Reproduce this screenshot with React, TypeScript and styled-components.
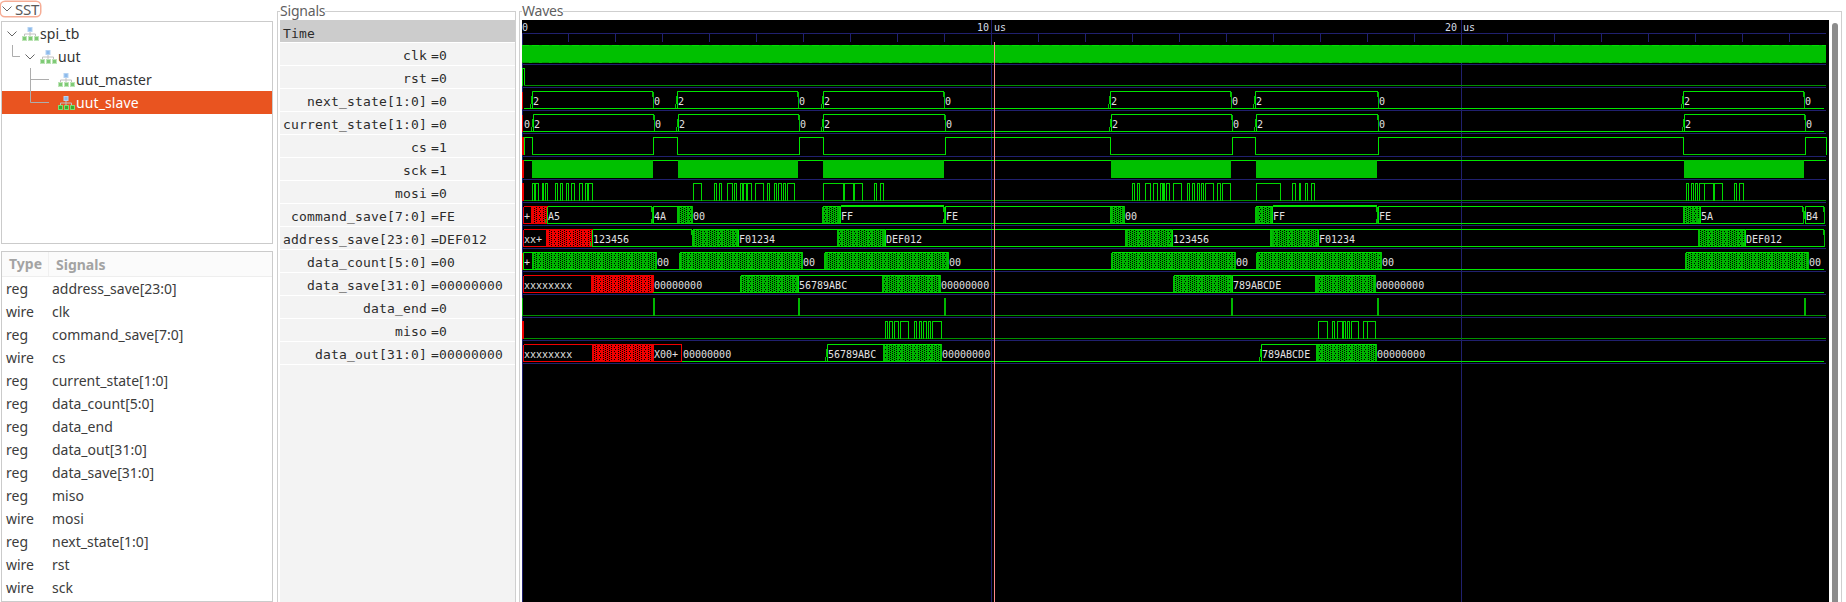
import React from "react";
import styled, { createGlobalStyle } from "styled-components";

const GlobalStyle = createGlobalStyle`
  html, body { margin: 0; padding: 0; background: #fff; overflow: hidden; }
  #root { height: 602px; }
`;

const UI_FONT = `"Noto Sans", "Open Sans", sans-serif`;
const MONO_FONT = `"DejaVu Sans Mono", "Liberation Mono", monospace`;

const Page = styled.div`
  display: flex;
  width: 1846px;
  height: 602px;
  overflow: hidden;
  font-family: ${UI_FONT};
`;
const LeftColumn = styled.div`
  width: 274px;
  flex: none;
  display: flex;
  flex-direction: column;
`;
const SstHeader = styled.div`
  align-self: flex-start;
  display: flex;
  align-items: center;
  gap: 3px;
  height: 14px;
  margin: 2px 0 5px 1px;
  padding: 0 1px 0 1px;
  border-radius: 4px;
  box-shadow: 0 0 0 1.5px #f6ad96;
  font-size: 15px;
  letter-spacing: -0.2px;
  color: #5a5a5a;
`;
const Panel = styled.div<{ $grow?: boolean }>`
  margin-left: 1px;
  width: 272px;
  box-sizing: border-box;
  border: 1px solid #cbcbcb;
  background: #fff;
  overflow: hidden;
  ${(p) => (p.$grow ? "flex: 1;" : "height: 223px; margin-bottom: 7px;")}
`;
const TreeRow = styled.div<{ $selected?: boolean }>`
  display: flex;
  align-items: center;
  height: 23px;
  padding-left: 1px;
  font-size: 14px;
  color: ${(p) => (p.$selected ? "#ffffff" : "#333333")};
  background: ${(p) => (p.$selected ? "#e95420" : "transparent")};
`;
const TreeLabel = styled.span`
  margin-left: 1px;
  letter-spacing: 0.1px;
`;
const TableHead = styled.div`
  display: grid;
  grid-template-columns: 47px 1fr;
  height: 24px;
  align-items: center;
  background: #fbfbfb;
  border-bottom: 1px solid #eeeeee;
  font-size: 14px;
  font-weight: 700;
  color: #a3a3a3;
`;
const HeadCell = styled.span`
  padding-left: 7px;
  &:first-child { border-right: 1px solid #f0f0f0; line-height: 24px; }
`;
const TableRow = styled.div`
  display: grid;
  grid-template-columns: 46px 1fr;
  box-sizing: border-box;
  height: 23px;
  align-items: center;
  padding: 0 0 0 4px;
  font-size: 14px;
  color: #3c3c3c;
  white-space: nowrap;
`;
const Frame = styled.fieldset`
  margin: 2px 0 0 3px;
  padding: 0 0 0 2px;
  border: 1px solid #cfcfcf;
  border-bottom: none;
  min-width: 0;
  height: 600px;
  box-sizing: border-box;
`;
const SignalFrame = styled(Frame)`
  width: 239px;
  flex: none;
`;
const WaveFrame = styled(Frame)`
  width: 1323px;
  flex: none;
`;
const FrameTitle = styled.legend`
  padding: 0;
  margin-left: 0;
  height: 18px;
  line-height: 18px;
  font-size: 14px;
  letter-spacing: -0.2px;
  color: #5f5f5f;
`;
const SignalPanel = styled.div`
  height: 582px;
  background: #f3f3f3;
  font-family: ${MONO_FONT};
  font-size: 13px;
  letter-spacing: 0.17px;
  color: #2c2c2c;
`;
const TimeRow = styled.div`
  height: 22px;
  line-height: 28px;
  padding-left: 3px;
  background: #cccccc;
  border-bottom: 1px solid #ffffff;
`;
const SignalRow = styled.div`
  display: grid;
  grid-template-columns: 147px 1fr;
  column-gap: 4px;
  height: 22px;
  line-height: 26px;
  border-bottom: 1px solid #ffffff;
  white-space: nowrap;
`;
const SignalName = styled.span`
  text-align: right;
`;
const SignalValue = styled.span``;
const WaveBody = styled.div`
  display: flex;
  height: 582px;
`;
const WaveCanvas = styled.svg`
  display: block;
  flex: none;
  background: #000000;
`;
const ScrollThumb = styled.div`
  width: 6px;
  height: 600px;
  margin: 3px 0 0 3px;
  border-radius: 3px;
  background: #8c8c8c;
  flex: none;
`;

/* ---------- icons ---------- */
const Chevron = ({ color = "#666" }: { color?: string }) => (
  <svg width="10" height="8" viewBox="0 0 10 8" style={{ flex: "none" }}>
    <path d="M0.5 1.5 L5 6 L9.5 1.5" fill="none" stroke={color} strokeWidth="1" />
  </svg>
);

const ModuleIcon = ({ vivid }: { vivid?: boolean }) => {
  const outer = vivid ? "#7fdc70" : "#bde5b7";
  const inner = vivid ? "#35b02f" : "#7fca76";
  return (
    <svg width="17" height="14" viewBox="0 0 17 14" style={{ flex: "none" }}>
      <rect x="5.5" y="0" width="5" height="5" fill="#b5d3f3" />
      <rect x="6.5" y="1" width="3" height="3" fill="#8dbbec" />
      <path d="M8 5v2M2.5 9V7h11v2M8 7v2" fill="none" stroke="#c0c0c0" strokeWidth="1" />
      {[0, 6, 12].map((x) => (
        <g key={x}>
          <rect x={x} y="9" width="5" height="5" fill={outer} />
          <rect x={x + 1} y="10" width="3" height="3" fill={inner} />
        </g>
      ))}
    </svg>
  );
};

const Guide = ({ width, d }: { width: number; d?: string }) => (
  <svg width={width} height="23" viewBox={`0 0 ${width} 23`} style={{ flex: "none", overflow: "visible" }}>
    {d && <path d={d} fill="none" stroke="#adadad" strokeWidth="1" />}
  </svg>
);

/* ---------- wave data ---------- */
type Kind = "box" | "zero" | "dense";
type Seg = { a: number; b: number; k: Kind; t?: string; red?: boolean; thick?: boolean };
const box = (a: number, b: number, t?: string, thick?: boolean): Seg => ({ a, b, k: "box", t, thick });
const zero = (a: number, b: number, t?: string): Seg => ({ a, b, k: "zero", t });
const dense = (a: number, b: number): Seg => ({ a, b, k: "dense" });
const rbox = (a: number, b: number, t?: string): Seg => ({ a, b, k: "box", t, red: true });
const rdense = (a: number, b: number): Seg => ({ a, b, k: "dense", red: true });

const SEP = { clk: 64, rst: 87, next: 110, cur: 133, cs: 156, sck: 179, mosi: 202, cmd: 225, addr: 248, cnt: 271, save: 294, end: 317, miso: 340, out: 363 };
const RIGHT = 1826;

const states = (edges: number[]): Seg[] => {
  const r: Seg[] = [];
  for (let i = 0; i < edges.length - 1; i++) {
    r.push(i % 2 === 0 ? box(edges[i], edges[i + 1], "2") : zero(edges[i], edges[i + 1], "0"));
  }
  return r;
};

const BUSES: { sep: number; segs: Seg[] }[] = [
  { sep: SEP.next, segs: [zero(524, 532), ...states([532, 653, 677, 798, 823, 944, 1110, 1231, 1255, 1378, 1683, 1804, 1824])] },
  { sep: SEP.cur, segs: [zero(523, 533, "0"), ...states([533, 654, 678, 799, 823, 945, 1111, 1232, 1256, 1378, 1684, 1805, 1824])] },
  {
    sep: SEP.cmd,
    segs: [
      rbox(523, 532, "+"), rdense(532, 547), box(547, 652, "A5"), box(653, 678, "4A"), dense(678, 692), zero(692, 823, "00"),
      dense(823, 840), box(840, 944, "FF", true), box(945, 1111, "FE"), dense(1111, 1124), zero(1124, 1256, "00"),
      dense(1256, 1272), box(1272, 1377, "FF", true), box(1378, 1684, "FE"), dense(1684, 1700), box(1700, 1803, "5A"), box(1805, 1824, "B4"),
    ],
  },
  {
    sep: SEP.addr,
    segs: [
      rbox(523, 547, "xx+"), rdense(547, 592), box(592, 692, "123456"), dense(693, 738), box(738, 838, "F01234"), dense(838, 885),
      box(885, 1126, "DEF012"), dense(1126, 1172), box(1172, 1271, "123456"), dense(1271, 1318), box(1318, 1699, "F01234"),
      dense(1699, 1745), box(1745, 1824, "DEF012"),
    ],
  },
  {
    sep: SEP.cnt,
    segs: [
      box(523, 533, "+"), dense(533, 656), zero(656, 680, "00"), dense(680, 802), zero(802, 825, "00"), dense(825, 948),
      zero(948, 1112, "00"), dense(1112, 1235), zero(1235, 1257, "00"), dense(1257, 1381), zero(1381, 1686, "00"),
      dense(1686, 1808), zero(1808, 1824, "00"),
    ],
  },
  {
    sep: SEP.save,
    segs: [
      rbox(523, 592, "xxxxxxxx"), rdense(592, 653), zero(653, 741, "00000000"), dense(741, 798), box(798, 883, "56789ABC"),
      dense(883, 940), zero(940, 1174, "00000000"), dense(1174, 1231), box(1232, 1316, "789ABCDE"), dense(1316, 1375), zero(1375, 1824, "00000000"),
    ],
  },
  {
    sep: SEP.out,
    segs: [
      rbox(523, 593, "xxxxxxxx"), rdense(593, 653), rbox(653, 682, "X00+"), zero(682, 827, "00000000"), box(827, 884, "56789ABC"),
      dense(884, 941), zero(941, 1261, "00000000"), box(1261, 1317, "789ABCDE"), dense(1317, 1376), zero(1376, 1824, "00000000"),
    ],
  },
];

// high intervals in zoom coordinates (origin + z / 3)
const z = (o: number, list: number[][]) => list.map(([a, b]) => [o + a / 3, o + b / 3]);
const MOSI = [
  ...z(270, [[787, 791], [795, 805], [815, 820], [825, 831], [855, 861], [871, 875], [889, 895], [903, 912], [927, 937], [945, 951], [955, 965]]),
  ...z(660, [[100, 122], [162, 167], [177, 182], [200, 215], [222, 228], [240, 245], [250, 258], [262, 272], [285, 308], [322, 328], [342, 348], [355, 362], [368, 375], [380, 403], [490, 548], [552, 578], [582, 605], [642, 648], [660, 668]]),
  ...z(1050, [[246, 252], [262, 268], [285, 300], [308, 322], [330, 336], [340, 343], [347, 356], [370, 392], [410, 418], [425, 432], [440, 448], [452, 460], [465, 488], [500, 510], [516, 540], [618, 690], [726, 735], [746, 750], [765, 770], [783, 791]]),
  ...z(1446, [[720, 727], [735, 742], [748, 752], [760, 775], [775, 802], [805, 827], [865, 871], [880, 890]]),
];
const MISO = [
  ...z(660, [[676, 682], [688, 695], [703, 713], [720, 745], [763, 767], [777, 783], [790, 797], [805, 810], [815, 842]]),
  ...z(1050, [[805, 830], [847, 851], [860, 875], [880, 885], [890, 897], [902, 925], [940, 950], [952, 976]]),
];
const CS = [[524, 532], [653, 677], [799, 823], [945, 1110], [1232, 1255], [1378, 1683], [1805, RIGHT]];
const SCK_FILL = [[532, 653], [678, 798], [823, 944], [1111, 1231], [1256, 1377], [1684, 1804]];
const END_PULSES = [522, 653, 798, 944, 1231, 1377, 1804];

const TOP = (sep: number) => sep - 19 + 0.5;
const LOW = (sep: number) => sep - 2 + 0.5;

const pulsePath = (sep: number, highs: number[][]) => {
  const hi = TOP(sep);
  let d = "";
  highs.forEach(([a, b]) => {
    const x0 = Math.round(a) + 0.5;
    const x1 = Math.round(b) + 0.5;
    d += `M${x0} ${LOW(sep)}V${hi}H${x1}V${LOW(sep)}`;
  });
  return d;
};

const crossing = (x: number, sep: number, w = 2) =>
  `M${x} ${TOP(sep)}L${x + w} ${LOW(sep)}M${x} ${LOW(sep)}L${x + w} ${TOP(sep)}`;

const busPaths = () => {
  const p = { bright: "", mid: "", red: "", redMid: "", thick: "" };
  BUSES.forEach(({ sep, segs }) => {
    segs.forEach((s) => {
      const hi = TOP(sep);
      const lo = LOW(sep);
      const line = s.red ? "red" : "bright";
      if (s.k === "zero") {
        p.bright += `M${s.a} ${lo}H${s.b}`;
      } else if (s.k === "box") {
        p[line] += `M${s.a + 1} ${hi}H${s.b}M${s.a} ${lo}H${s.b}`;
        if (s.red) {
          p.red += `M${s.a + 0.5} ${hi}V${lo}M${s.b - 0.5} ${hi}V${lo}`;
        } else {
          p.mid += `M${s.a - 1.5} ${lo}L${s.a + 0.5} ${hi}`;
          p.bright += `M${s.a + 0.5} ${hi}V${lo}`;
          p.mid += `M${s.b - 0.5} ${hi}L${s.b + 1} ${lo}M${s.b} ${hi}L${s.b} ${lo}`;
        }
        if (s.thick) p.thick += `M${s.a + 1} ${hi - 1}H${s.b}`;
      } else {
        const target = s.red ? "redMid" : "mid";
        p[line] += `M${s.a} ${hi}H${s.b}M${s.a} ${lo}H${s.b}`;
        p[target] += crossing(s.a - 1, sep) + crossing(s.b - 1, sep);
      }
    });
  });
  return p;
};

const DENSE_RECTS = BUSES.flatMap(({ sep, segs }) =>
  segs.filter((s) => s.k === "dense").map((s) => ({ x: s.a, y: TOP(sep), w: s.b - s.a, h: LOW(sep) - TOP(sep), red: !!s.red }))
);

const NAMES: [string, string][] = [
  ["clk", "=0"], ["rst", "=0"], ["next_state[1:0]", "=0"], ["current_state[1:0]", "=0"], ["cs", "=1"], ["sck", "=1"], ["mosi", "=0"],
  ["command_save[7:0]", "=FE"], ["address_save[23:0]", "=DEF012"], ["data_count[5:0]", "=00"], ["data_save[31:0]", "=00000000"],
  ["data_end", "=0"], ["miso", "=0"], ["data_out[31:0]", "=00000000"],
];
const VARS: [string, string][] = [
  ["reg", "address_save[23:0]"], ["wire", "clk"], ["reg", "command_save[7:0]"], ["wire", "cs"], ["reg", "current_state[1:0]"],
  ["reg", "data_count[5:0]"], ["reg", "data_end"], ["reg", "data_out[31:0]"], ["reg", "data_save[31:0]"], ["reg", "miso"],
  ["wire", "mosi"], ["reg", "next_state[1:0]"], ["wire", "rst"], ["wire", "sck"],
];

const NAVY = "#20206e";
const BRIGHT = "#00e600";
const FILL = "#00c000";
const DARK = "#009000";
const RED = "#f00000";
const TEXT = "#e2e2e2";

// one 15px beat of the hatch: a dotted cluster between almost solid columns
const HATCH_DOTS = Array.from({ length: 5 }, (_, i) => i + 3).flatMap((x) =>
  [0, 2].map((y) => ({ x: x * 2 - 3, y: (y + x) % 4 }))
);

const Hatch = ({ id, color }: { id: string; color: string }) => (
  <pattern id={id} x="0" y="0" width="15" height="4" patternUnits="userSpaceOnUse">
    <rect width="15" height="4" fill={color} />
    {HATCH_DOTS.map((d, i) => (
      <rect key={i} x={d.x} y={d.y} width="1" height="1" fill="#000" />
    ))}
    <rect x="0" y="1" width="1" height="1" fill="#000" />
    <rect x="14" y="3" width="1" height="1" fill="#000" />
  </pattern>
);

const Waves = () => {
  const seps = Object.values(SEP);
  const ticks = Array.from({ length: 28 }, (_, k) => Math.floor(522 + 46.95 * k) + 0.5);
  const bp = busPaths();
  const labels = BUSES.flatMap(({ sep, segs }) => segs.filter((s) => s.t).map((s) => ({ x: s.a + 1, y: sep - 5, t: s.t as string })));
  return (
    <WaveCanvas width="1307" height="582" viewBox="522 20 1307 582" shapeRendering="crispEdges">
      <defs>
        <Hatch id="hatch-green" color="#00b400" />
        <Hatch id="hatch-red" color="#f00000" />
      </defs>
      {/* ruler and grid */}
      <path d={`M522 33.5H${RIGHT}`} stroke={NAVY} />
      <path d={ticks.map((x) => `M${x} 33V42`).join("")} stroke={NAVY} />
      <path d="M522.5 33V602M991.5 20V602M1461.5 20V602" stroke={NAVY} />
      <path d={seps.map((y) => `M522 ${y + 0.5}H${RIGHT}`).join("")} stroke={NAVY} />

      {/* clk */}
      <rect x="522" y="45" width={RIGHT - 522} height="18" fill={FILL} />
      <path d={`M522 45.5H${RIGHT}`} stroke="#00e000" strokeDasharray="7 3" />
      <path d={`M522 62.5H${RIGHT}`} stroke="#009c00" strokeDasharray="7 3" />

      {/* rst */}
      <path d={`M522.5 ${LOW(SEP.rst)}V${TOP(SEP.rst)}H524.5V${LOW(SEP.rst)}`} stroke={BRIGHT} fill="none" />
      <path d={`M524 ${LOW(SEP.rst)}H${RIGHT}`} stroke={DARK} />

      {/* cs */}
      <path d={pulsePath(SEP.cs, CS)} stroke={BRIGHT} fill="none" />
      <path d={CS.slice(0, -1).map(([, b], i) => `M${b} ${LOW(SEP.cs)}H${CS[i + 1][0]}`).join("")} stroke="#00c800" />
      <rect x="522" y="137" width="2" height="18" fill={RED} />

      {/* sck */}
      <path d={`M524 ${TOP(SEP.sck)}H${RIGHT}`} stroke={BRIGHT} />
      {SCK_FILL.map(([a, b]) => (
        <rect key={a} x={a} y={160} width={b - a} height={18} fill={FILL} />
      ))}
      <rect x="522" y="160" width="2" height="18" fill={RED} />

      {/* mosi */}
      <path d={`M524 ${LOW(SEP.mosi)}H${RIGHT}`} stroke={DARK} />
      <path d={pulsePath(SEP.mosi, MOSI)} stroke="#00d800" fill="none" />
      <rect x="522" y="183" width="2" height="18" fill={RED} />

      {/* data_end */}
      <path d={`M522 ${LOW(SEP.end)}H${RIGHT}`} stroke={DARK} />
      {END_PULSES.map((x, i) => (
        <rect key={x} x={x} y={298} width={i === 0 ? 1 : 2} height={18} fill="#00b800" />
      ))}

      {/* miso */}
      <path d={`M524 ${LOW(SEP.miso)}H${RIGHT}`} stroke={DARK} />
      <path d={pulsePath(SEP.miso, MISO)} stroke="#00d800" fill="none" />
      <rect x="522" y="321" width="2" height="18" fill={RED} />

      {/* buses */}
      {DENSE_RECTS.map((r) => (
        <rect key={`${r.x}-${r.y}`} x={r.x} y={r.y} width={r.w} height={r.h} fill={r.red ? "url(#hatch-red)" : "url(#hatch-green)"} />
      ))}
      <path d={bp.mid} stroke={FILL} fill="none" />
      <path d={bp.redMid} stroke={RED} fill="none" />
      <path d={bp.bright} stroke={BRIGHT} fill="none" />
      <path d={bp.red} stroke={RED} fill="none" />
      <path d={bp.thick} stroke={BRIGHT} fill="none" />
      <path d={`M522.5 ${LOW(SEP.next)}V${TOP(SEP.next)}M522.5 ${LOW(SEP.cur)}V${TOP(SEP.cur)}M522.5 ${LOW(SEP.cnt)}V${TOP(SEP.cnt)}`} stroke={RED} />

      {/* cursor */}
      <path d="M994.5 42V602" stroke="#ff8a8a" />

      <g fontFamily={MONO_FONT} fontSize="10" fill={TEXT}>
        {labels.map((l, i) => (
          <text key={i} x={l.x} y={l.y}>{l.t}</text>
        ))}
      </g>
      <g fontFamily={MONO_FONT} fontSize="10" fill="#d6dce6">
        <text x="522" y="31">0</text>
        <text x="977" y="31">10</text>
        <text x="994" y="31">us</text>
        <text x="1445" y="31">20</text>
        <text x="1463" y="31">us</text>
      </g>
    </WaveCanvas>
  );
};

export default function App() {
  return (
    <Page>
      <GlobalStyle />
      <LeftColumn>
        <SstHeader>
          <Chevron />
          <span>SST</span>
        </SstHeader>
        <Panel>
          <TreeRow>
            <Guide width={4} />
            <Chevron />
            <Guide width={5} />
            <ModuleIcon />
            <TreeLabel>spi_tb</TreeLabel>
          </TreeRow>
          <TreeRow>
            <Guide width={22} d="M9.5 0V11.5H17" />
            <Chevron />
            <Guide width={5} />
            <ModuleIcon />
            <TreeLabel>uut</TreeLabel>
          </TreeRow>
          <TreeRow>
            <Guide width={55} d="M27.5 0V23M27.5 11.5H46" />
            <ModuleIcon />
            <TreeLabel>uut_master</TreeLabel>
          </TreeRow>
          <TreeRow $selected>
            <Guide width={55} d="M27.5 0V11.5H46" />
            <ModuleIcon vivid />
            <TreeLabel>uut_slave</TreeLabel>
          </TreeRow>
        </Panel>
        <Panel $grow>
          <TableHead>
            <HeadCell>Type</HeadCell>
            <HeadCell>Signals</HeadCell>
          </TableHead>
          {VARS.map(([t, n]) => (
            <TableRow key={n}>
              <span>{t}</span>
              <span>{n}</span>
            </TableRow>
          ))}
        </Panel>
      </LeftColumn>
      <SignalFrame>
        <FrameTitle>Signals</FrameTitle>
        <SignalPanel>
          <TimeRow>Time</TimeRow>
          {NAMES.map(([n, v]) => (
            <SignalRow key={n}>
              <SignalName>{n}</SignalName>
              <SignalValue>{v}</SignalValue>
            </SignalRow>
          ))}
        </SignalPanel>
      </SignalFrame>
      <WaveFrame>
        <FrameTitle>Waves</FrameTitle>
        <WaveBody>
          <Waves />
          <ScrollThumb />
        </WaveBody>
      </WaveFrame>
    </Page>
  );
}
